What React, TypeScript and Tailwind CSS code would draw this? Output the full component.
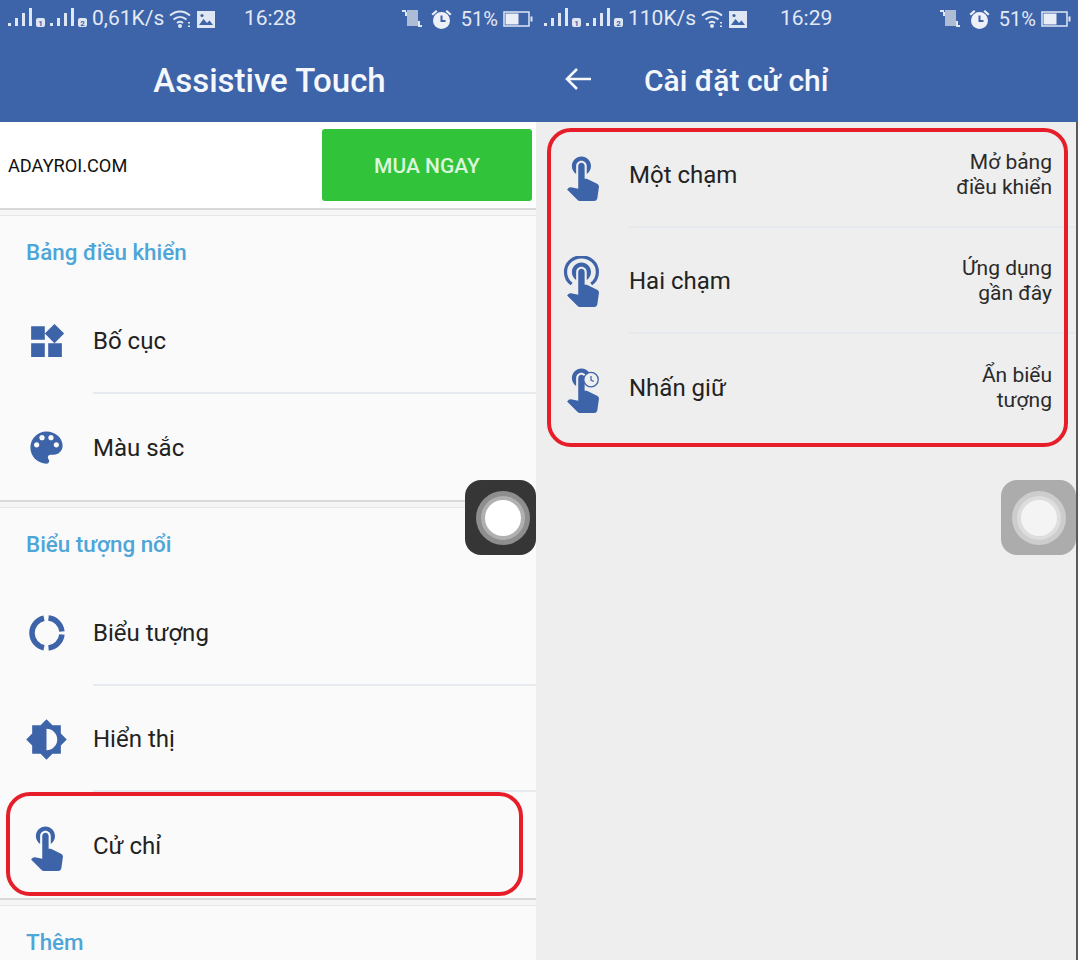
const BLUE = "#3d63a9";
const TOUCH =
  "M9 11.24V7.5C9 6.12 10.12 5 11.5 5S14 6.12 14 7.5v3.74c1.21-.81 2-2.18 2-3.74C16 5.01 13.99 3 11.5 3S7 5.01 7 7.5c0 1.56.79 2.93 2 3.74zm9.84 4.63l-4.54-2.26c-.17-.07-.35-.11-.54-.11H13v-6c0-.83-.67-1.5-1.5-1.5S10 6.67 10 7.5v10.74l-3.43-.72c-.08-.01-.15-.03-.24-.03-.31 0-.59.13-.79.33l-.79.8 4.94 4.94c.27.27.65.44 1.06.44h6.79c.75 0 1.33-.55 1.44-1.28l.75-5.27c.01-.07.02-.14.02-.2 0-.62-.38-1.16-.91-1.38z";

function Icon({ size, children }: { size: number; children: React.ReactNode }) {
  return (
    <svg width={size} height={size} viewBox="0 0 24 24" fill={BLUE}>
      {children}
    </svg>
  );
}

function TouchIcon() {
  return (
    <Icon size={51}>
      <path d={TOUCH} />
    </Icon>
  );
}

function DoubleTouchIcon() {
  return (
    <Icon size={51}>
      <path d={TOUCH} />
      <path
        d="M6.9 13.2C5.1 11.9 4 9.8 4 7.5 4 3.4 7.4 0.4 11.5 0.4S19 3.4 19 7.5c0 2.3-1.1 4.4-2.9 5.7"
        fill="none"
        stroke={BLUE}
        strokeWidth="1.5"
      />
    </Icon>
  );
}

function HoldIcon({ bg }: { bg: string }) {
  return (
    <svg width={51} height={51} viewBox="0 0 24 24" fill={BLUE}>
      <path d={TOUCH} />
      <circle cx="16" cy="8.3" r="3.4" fill={bg} stroke={BLUE} strokeWidth="0.6" />
      <path d="M16 6.6v1.9l1.3.7" fill="none" stroke={BLUE} strokeWidth="0.6" />
    </svg>
  );
}

function WidgetsIcon() {
  return (
    <Icon size={41}>
      <path d="M13 13v8h8v-8h-8zM3 21h8v-8H3v8zM3 3v8h8V3H3zm13.66-1.31L11 7.34 16.66 13l5.66-5.66-5.66-5.65z" />
    </Icon>
  );
}

function PaletteIcon() {
  return (
    <Icon size={43}>
      <path d="M12 3c-4.97 0-9 4.03-9 9s4.03 9 9 9c.83 0 1.5-.67 1.5-1.5 0-.39-.15-.74-.39-1.01-.23-.26-.38-.61-.38-.99 0-.83.67-1.5 1.5-1.5H16c2.76 0 5-2.24 5-5 0-4.42-4.03-8-9-8zm-5.5 9c-.83 0-1.5-.67-1.5-1.5S5.67 9 6.5 9 8 9.67 8 10.5 7.33 12 6.5 12zm3-4C8.67 8 8 7.33 8 6.5S8.67 5 9.5 5s1.5.67 1.5 1.5S10.33 8 9.5 8zm5 0c-.83 0-1.5-.67-1.5-1.5S13.67 5 14.5 5s1.5.67 1.5 1.5S15.33 8 14.5 8zm3 4c-.83 0-1.5-.67-1.5-1.5S16.67 9 17.5 9s1.5.67 1.5 1.5-.67 1.5-1.5 1.5z" />
    </Icon>
  );
}

function RingIcon() {
  return (
    <svg width={38} height={38} viewBox="0 0 38 38" fill="none" stroke={BLUE} strokeWidth="5.5">
      <path d="M20.5 4.1A15 15 0 0 1 33.9 17.5" />
      <path d="M33.9 20.5A15 15 0 0 1 20.5 33.9" />
      <path d="M16 33.7A15 15 0 0 1 16 4.3" />
    </svg>
  );
}

function BrightnessIcon() {
  return (
    <Icon size={43}>
      <path d="M20 15.31L23.31 12 20 8.69V4h-4.69L12 .69 8.69 4H4v4.69L.69 12 4 15.31V20h4.69L12 23.31 15.31 20H20v-4.69zM12 18V6c3.31 0 6 2.69 6 6s-2.69 6-6 6z" />
    </Icon>
  );
}

function Signal({ n }: { n: string }) {
  return (
    <svg width="40" height="22" viewBox="0 0 40 22" fill="#dfe7f4">
      <rect x="0" y="15" width="3" height="3" />
      <rect x="7" y="10" width="3" height="8" />
      <rect x="14" y="5" width="3" height="13" />
      <rect x="21" y="0" width="3" height="18" />
      <rect x="28" y="10" width="9" height="9" rx="2" />
      <text x="32.5" y="17.5" fontSize="8" fontWeight="700" textAnchor="middle" fill={BLUE} fontFamily="Roboto, sans-serif">
        {n}
      </text>
    </svg>
  );
}

function StatusIcons({ kind }: { kind: "wifi" | "image" | "vibrate" | "alarm" | "battery" }) {
  if (kind === "wifi")
    return (
      <svg width="23" height="20" viewBox="0 0 23 20" fill="none" stroke="#dfe7f4" strokeWidth="2">
        <path d="M1 6.5C7 1 15 1 21 6.5" />
        <path d="M4.5 10.5c4-3.5 9-3.5 13 0" />
        <path d="M8 14c2-1.6 4-1.6 6 0" />
        <circle cx="11" cy="17" r="2" fill="#dfe7f4" stroke="none" />
        <path d="M20 13v1.5M20 16.5V18" />
      </svg>
    );
  if (kind === "image")
    return (
      <svg width="18" height="17" viewBox="0 0 18 17">
        <rect width="18" height="17" fill="#dfe7f4" />
        <path d="M2 14l4.5-6 3.5 4 2.5-2.5L16 14z" fill={BLUE} />
        <circle cx="5" cy="4.5" r="1.6" fill={BLUE} />
      </svg>
    );
  if (kind === "vibrate")
    return (
      <svg width="20" height="20" viewBox="0 0 20 20" fill="#dfe7f4">
        <rect x="5" y="1" width="11" height="16" fill="#aebcd6" />
        <rect x="0" y="1" width="4" height="2" />
        <rect x="3" y="3" width="2" height="4" />
        <rect x="16" y="12" width="2" height="6" />
        <rect x="18" y="16" width="2" height="2" />
      </svg>
    );
  if (kind === "alarm")
    return (
      <svg width="21" height="21" viewBox="0 0 21 21">
        <circle cx="10.5" cy="11.5" r="8.5" fill="#eef2f8" />
        <path d="M10.5 6.5v5.5h4" fill="none" stroke={BLUE} strokeWidth="2" />
        <path d="M0.5 5L5 1l1.5 1.5L2 6.5zM20.5 5L16 1l-1.5 1.5L19 6.5z" fill="#eef2f8" />
      </svg>
    );
  return (
    <svg width="30" height="16" viewBox="0 0 30 16">
      <rect x="1" y="1" width="25" height="14" fill="none" stroke="#dfe7f4" strokeWidth="1.5" />
      <rect x="2.5" y="2.5" width="13" height="11" fill="#e9eef7" />
      <rect x="27.5" y="5.5" width="2" height="5" fill="#dfe7f4" />
    </svg>
  );
}

function StatusBar({ speed, time, wide }: { speed: string; time: string; wide?: boolean }) {
  return (
    <div className="flex h-[38px] items-center text-[21px] text-[#e3e9f5]">
      <div className="flex w-[244px] items-center pl-2">
        <div className="flex items-center gap-[2px]">
          <Signal n="1" />
          <Signal n="2" />
        </div>
        <span className="ml-[2px]">{speed}</span>
        <div className="ml-[5px] flex items-center gap-[5px]">
          <StatusIcons kind="wifi" />
          <StatusIcons kind="image" />
        </div>
      </div>
      <span>{time}</span>
      <div className={`ml-auto flex items-center ${wide ? "pr-[7px]" : "pr-[3px]"}`}>
        <StatusIcons kind="vibrate" />
        <div className="ml-[9px]">
          <StatusIcons kind="alarm" />
        </div>
        <span className="ml-[9px] text-[20px]">51%</span>
        <div className="ml-[5px]">
          <StatusIcons kind="battery" />
        </div>
      </div>
    </div>
  );
}

function SectionGap() {
  return <div className="h-2 border-t-2 border-b border-t-[#d9d9d9] border-b-[#e6e6e6] bg-[#f5f5f5]" />;
}

function SectionTitle({ children }: { children: React.ReactNode }) {
  return (
    <div className="flex h-[72px] items-center pt-[2px] pl-[26px] text-[22.4px] font-medium text-[#4da5d8]">
      {children}
    </div>
  );
}

function Row({
  icon,
  label,
  value,
  divider,
}: {
  icon: React.ReactNode;
  label: string;
  value?: [string, string];
  divider?: boolean;
}) {
  return (
    <div className="flex h-[106px]">
      <div className="flex w-[93px] shrink-0 items-center justify-center">{icon}</div>
      <div
        className={`flex flex-1 items-center justify-between pt-[1px] ${divider ? "border-b-2 border-[#e6e9ee]" : ""}`}
      >
        <span className="text-[24px] text-[#222222]">{label}</span>
        {value && (
          <div className="pr-6 text-right text-[21px] leading-[25px] text-[#2a2a2a]">
            <div>{value[0]}</div>
            <div>{value[1]}</div>
          </div>
        )}
      </div>
    </div>
  );
}

function Assist({ dark }: { dark?: boolean }) {
  return (
    <div
      className={`flex h-[75px] items-center justify-center rounded-2xl ${dark ? "w-[71px] bg-[#363636] pl-[5px]" : "w-[75px] bg-[#acacac]"}`}
    >
      <div
        className={`flex h-[54px] w-[54px] shrink-0 items-center justify-center rounded-full ${dark ? "bg-[#8e8e8e]" : "bg-[#cdcdcd]"}`}
      >
        <div
          className={`flex h-[44px] w-[44px] items-center justify-center rounded-full ${dark ? "bg-[#b0b0b0]" : "bg-[#dddddd]"}`}
        >
          <div className={`h-[36px] w-[36px] rounded-full ${dark ? "bg-white" : "bg-[#f4f4f4]"}`} />
        </div>
      </div>
    </div>
  );
}

export default function App() {
  return (
    <div
      className="relative flex h-[960px] w-[1078px] overflow-hidden"
      style={{ fontFamily: "Roboto, 'Noto Sans', sans-serif" }}
    >
      <div className="w-[536px] shrink-0 bg-[#fafafa]">
        <div className="h-[122px] bg-[#3d63a9]">
          <StatusBar speed="0,61K/s" time="16:28" />
          <div className="flex h-[84px] items-center justify-center pt-[1px] pl-[3px] text-[33px] font-medium text-[#f4f7fb]">
            Assistive Touch
          </div>
        </div>
        <div className="flex h-[86px] items-center justify-between bg-white pr-1 pl-2">
          <span className="pt-[1px] text-[18.2px] text-[#111111]">ADAYROI.COM</span>
          <div className="flex h-[72px] w-[210px] items-center justify-center rounded-[3px] bg-[#31c33a] pt-[3px] text-[21px] font-medium text-[#dcf6dc]">
            MUA NGAY
          </div>
        </div>
        <SectionGap />
        <SectionTitle>Bảng điều khiển</SectionTitle>
        <Row icon={<WidgetsIcon />} label="Bố cục" divider />
        <Row icon={<PaletteIcon />} label="Màu sắc" />
        <SectionGap />
        <SectionTitle>Biểu tượng nổi</SectionTitle>
        <Row icon={<RingIcon />} label="Biểu tượng" divider />
        <Row icon={<BrightnessIcon />} label="Hiển thị" divider />
        <Row icon={<TouchIcon />} label="Cử chỉ" />
        <SectionGap />
        <SectionTitle>Thêm</SectionTitle>
      </div>

      <div className="flex flex-1 flex-col">
        <div className="h-[122px] shrink-0 bg-[#3d63a9]">
          <StatusBar speed="110K/s" time="16:29" wide />
          <div className="flex h-[84px] items-center">
            <div className="flex w-[108px] justify-center pr-[24px] pb-[2px]">
              <svg width="28" height="24" viewBox="0 0 28 24" fill="none" stroke="#f4f7fb" strokeWidth="2.6">
                <path d="M27 12H3M13 2L3 12l10 10" />
              </svg>
            </div>
            <span className="text-[30px] font-medium text-[#f4f7fb]">Cài đặt cử chỉ</span>
          </div>
        </div>
        <div className="flex-1 border-r-2 border-[#5a5a5a] bg-[#eeeeee]">
          <Row icon={<TouchIcon />} label="Một chạm" value={["Mở bảng", "điều khiển"]} divider />
          <Row icon={<DoubleTouchIcon />} label="Hai chạm" value={["Ứng dụng", "gần đây"]} divider />
          <Row icon={<HoldIcon bg="#eeeeee" />} label="Nhấn giữ" value={["Ẩn biểu", "tượng"]} />
        </div>
      </div>

      <div className="absolute top-[480px] left-[465px]">
        <Assist dark />
      </div>
      <div className="absolute top-[480px] left-[1001px]">
        <Assist />
      </div>
      <div className="absolute top-[792px] left-[6px] h-[104px] w-[517px] rounded-[24px] border-4 border-[#e61e2a]" />
      <div className="absolute top-[128px] left-[547px] h-[319px] w-[521px] rounded-[24px] border-4 border-[#e61e2a]" />
    </div>
  );
}
